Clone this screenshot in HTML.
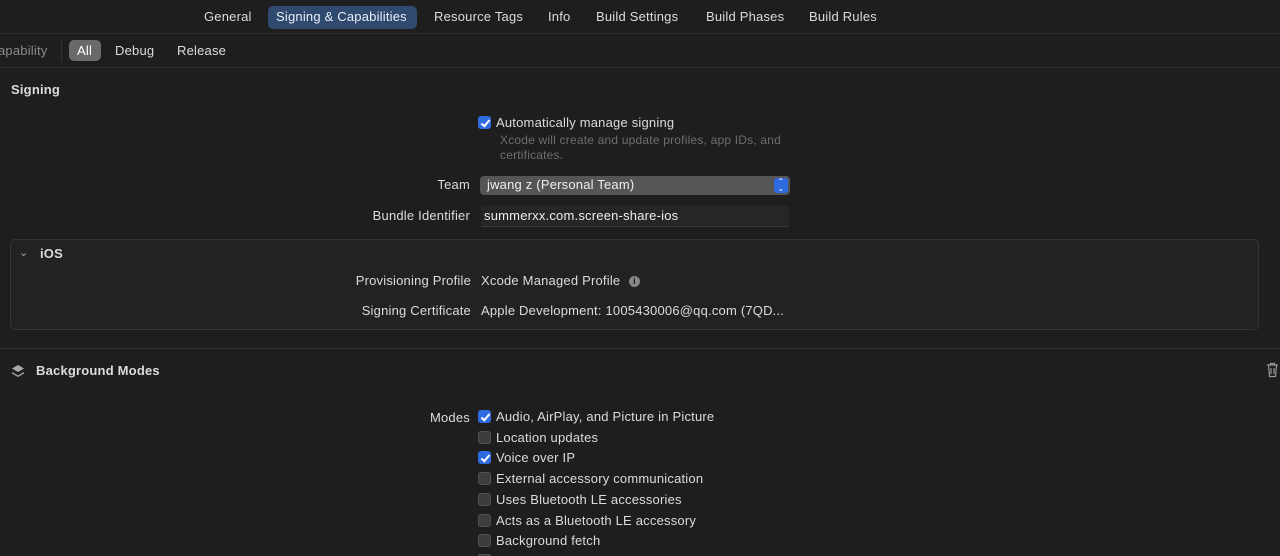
<!DOCTYPE html><html style="overflow:hidden;height:556px"><head><style>
body{margin:0;width:1280px;height:556px;background:#1e1e1e;overflow:hidden;font-family:"Liberation Sans",sans-serif;font-size:13px;color:#dcdcdc;position:relative;letter-spacing:0.2px}
.a{position:absolute;white-space:nowrap;line-height:16px}
.r{text-align:right}
.cb{position:absolute;width:13px;height:13px;border-radius:3px;background:#3d3d3d;border:1px solid #505050;box-sizing:border-box}
.cb.on{background:#2f6be0;border-color:#2f6be0}
.cb.on::after{content:"";position:absolute;left:4px;top:1px;width:3px;height:7px;border:solid #fff;border-width:0 2px 2px 0;transform:rotate(40deg)}
.hl{position:absolute;left:0;width:1280px;height:1px;background:#333}
</style></head><body>
<div class="hl" style="top:33px;background:#2e2e2e"></div>
<div class="hl" style="top:67px;background:#2e2e2e"></div>
<div style="position:absolute;left:268px;top:6px;width:149px;height:23px;background:#2f4a6e;border-radius:5px"></div>
<div class="a" style="left:204px;top:9px">General</div>
<div class="a" style="left:276px;top:9px;color:#e8eef8">Signing &amp; Capabilities</div>
<div class="a" style="left:434px;top:9px">Resource Tags</div>
<div class="a" style="left:548px;top:9px">Info</div>
<div class="a" style="left:596px;top:9px">Build Settings</div>
<div class="a" style="left:706px;top:9px">Build Phases</div>
<div class="a" style="left:809px;top:9px">Build Rules</div>
<div class="a" style="left:-2px;top:43px;color:#8a8a8a">apability</div>
<div style="position:absolute;left:61px;top:40px;width:1px;height:22px;background:#333"></div>
<div style="position:absolute;left:69px;top:40px;width:32px;height:21px;background:#6a6a6a;border-radius:5px"></div>
<div class="a" style="left:77px;top:43px;color:#fff">All</div>
<div class="a" style="left:115px;top:43px">Debug</div>
<div class="a" style="left:177px;top:43px">Release</div>
<div class="a" style="left:11px;top:82px;font-weight:bold">Signing</div>
<div class="cb on" style="left:478px;top:116px"></div>
<div class="a" style="left:496px;top:115px">Automatically manage signing</div>
<div class="a" style="left:500px;top:133px;color:#6e6e6e;font-size:12px;line-height:15px">Xcode will create and update profiles, app IDs, and<br>certificates.</div>
<div class="a r" style="left:370px;width:100px;top:177px">Team</div>
<div style="position:absolute;left:480px;top:176px;width:310px;height:19px;background:#555;border-radius:4px"></div>
<div style="position:absolute;left:774px;top:178px;width:14px;height:15px;background:#2f6be0;border-radius:3px;color:#fff;font-size:8px;line-height:7px;text-align:center">⌃<br>⌄</div>
<div class="a" style="left:487px;top:177px;color:#eee">jwang z (Personal Team)</div>
<div class="a r" style="left:300px;width:170px;top:208px">Bundle Identifier</div>
<div style="position:absolute;left:481px;top:206px;width:308px;height:20px;background:#262626;border-bottom:1px solid #3a3a3a"></div>
<div class="a" style="left:484px;top:208px;color:#eee">summerxx.com.screen-share-ios</div>
<div style="position:absolute;left:10px;top:239px;width:1249px;height:91px;background:#222;border:1px solid #353535;border-radius:5px;box-sizing:border-box"></div>
<div class="a" style="left:19px;top:245px;color:#aaa;font-size:11px">⌄</div>
<div class="a" style="left:40px;top:246px;font-weight:bold">iOS</div>
<div class="a r" style="left:300px;width:171px;top:273px">Provisioning Profile</div>
<div class="a" style="left:481px;top:273px">Xcode Managed Profile</div>
<div style="position:absolute;left:629px;top:276px;width:11px;height:11px;border-radius:50%;background:#888;color:#222;font-size:9px;line-height:11px;text-align:center;font-weight:bold">i</div>
<div class="a r" style="left:300px;width:171px;top:303px">Signing Certificate</div>
<div class="a" style="left:481px;top:303px">Apple Development: 1005430006@qq.com (7QD...</div>
<div class="hl" style="top:348px;background:#343434"></div>
<svg style="position:absolute;left:10px;top:363px" width="16" height="16" viewBox="0 0 16 16"><path d="M8 2L14 5.5 8 9 2 5.5Z" fill="#aaa"/><path d="M2 9L8 12.5 14 9 14 10.5 8 14 2 10.5Z" fill="#aaa"/></svg>
<div class="a" style="left:36px;top:363px;font-weight:bold">Background Modes</div>
<svg style="position:absolute;left:1266px;top:362px" width="13" height="16" viewBox="0 0 13 16"><path d="M1 3h11M4.5 3V1.5h4V3M2.5 3l1 11.5h6l1-11.5M5 6v6M8 6v6" stroke="#999" fill="none" stroke-width="1.2"/></svg>
<div class="a r" style="left:370px;width:100px;top:410px">Modes</div>
<div class="cb on" style="left:478px;top:410px"></div><div class="a" style="left:496px;top:409px">Audio, AirPlay, and Picture in Picture</div>
<div class="cb" style="left:478px;top:431px"></div><div class="a" style="left:496px;top:430px">Location updates</div>
<div class="cb on" style="left:478px;top:451px"></div><div class="a" style="left:496px;top:450px">Voice over IP</div>
<div class="cb" style="left:478px;top:472px"></div><div class="a" style="left:496px;top:471px">External accessory communication</div>
<div class="cb" style="left:478px;top:493px"></div><div class="a" style="left:496px;top:492px">Uses Bluetooth LE accessories</div>
<div class="cb" style="left:478px;top:514px"></div><div class="a" style="left:496px;top:513px">Acts as a Bluetooth LE accessory</div>
<div class="cb" style="left:478px;top:534px"></div><div class="a" style="left:496px;top:533px">Background fetch</div>
<div class="cb" style="left:478px;top:554px;height:2px;border-bottom:none;border-radius:3px 3px 0 0"></div>
</body></html>
